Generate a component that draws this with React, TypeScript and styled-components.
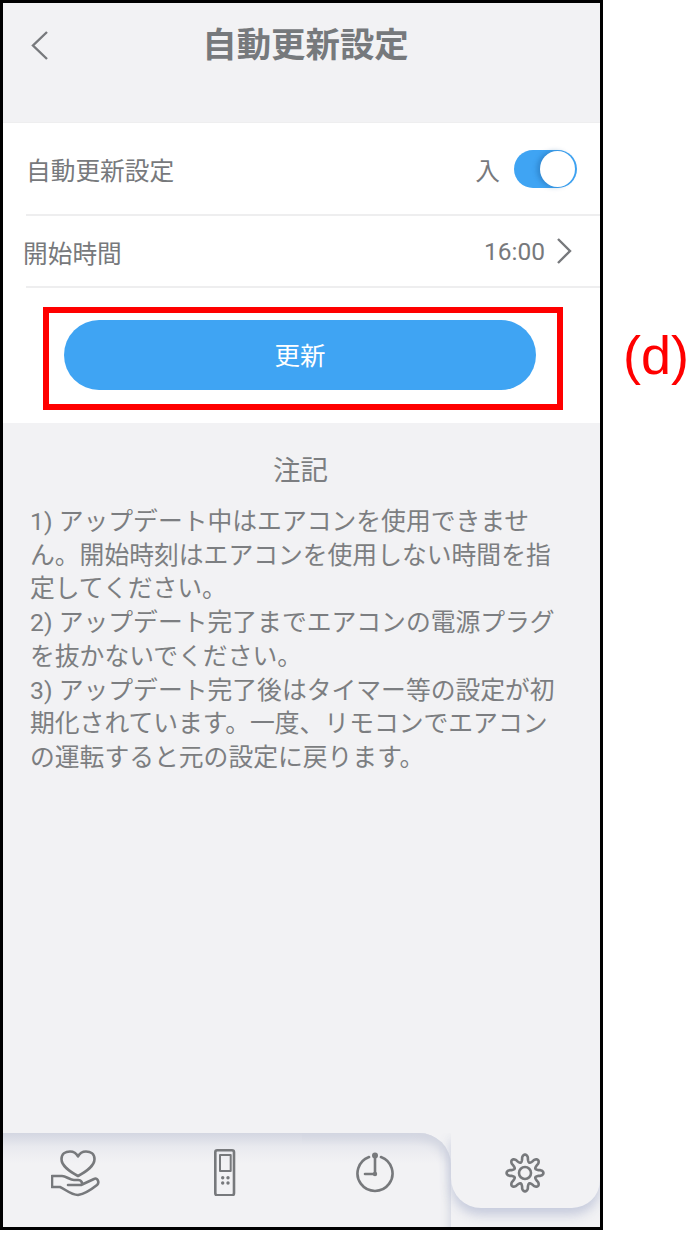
import styled, { createGlobalStyle } from 'styled-components';

const GlobalStyle = createGlobalStyle`
  html, body {
    margin: 0;
    padding: 0;
    background: #fff;
  }

  body {
    font-family: Roboto, "Noto Sans CJK JP", sans-serif;
  }
`;

const Canvas = styled.div`
  position: relative;
  width: 693px;
  height: 1233px;
  overflow: hidden;
`;

const Phone = styled.div`
  box-sizing: border-box;
  width: 603px;
  height: 1230px;
  border: 3px solid #000;
  background: #f2f2f4;
  display: flex;
  flex-direction: column;
`;

const Header = styled.header`
  height: 119px;
  flex-shrink: 0;
  display: grid;
  grid-template-columns: 60px 1fr 60px;
  align-items: start;
  padding-top: 18px;
  box-sizing: border-box;
`;

const BackButton = styled.div`
  padding: 10px 0 0 28px;
  height: 40px;
`;

const Title = styled.h1`
  margin: 0 0 0 8px;
  text-align: center;
  font-size: 34.4px;
  line-height: 48px;
  font-weight: 700;
  color: #76797c;
`;

const Panel = styled.section`
  background: #fff;
  border-top: 1px solid #eeeeef;
`;

const Row = styled.div<{ $height: number }>`
  height: ${({ $height }) => $height}px;
  box-sizing: border-box;
  margin-left: 23px;
  padding-right: 23px;
  border-bottom: 2px solid #eeeeef;
  display: flex;
  align-items: center;
  justify-content: space-between;
  color: #77797c;
  font-size: 24.7px;
`;

const RowLabel = styled.span<{ $indent: number; $drop: number }>`
  margin-left: ${({ $indent }) => $indent}px;
  margin-top: ${({ $drop }) => $drop}px;
`;

const RowValue = styled.div<{ $gap: number; $inset: number }>`
  display: flex;
  align-items: center;
  gap: ${({ $gap }) => $gap}px;
  padding-right: ${({ $inset }) => $inset}px;
`;

const Toggle = styled.div`
  width: 63px;
  height: 38px;
  border-radius: 19px;
  background: #3fa4f3;
  position: relative;
  box-sizing: border-box;
`;

const Knob = styled.div`
  position: absolute;
  right: 2px;
  top: 1px;
  width: 35px;
  height: 36px;
  border-radius: 50%;
  background: #fff;
  box-shadow: -3px 0 5px rgba(20, 80, 140, 0.35);
`;

const Time = styled.span`
  font-size: 24.5px;
`;

const ButtonArea = styled.div`
  height: 135px;
  display: flex;
  padding: 32px 0 0 61px;
  box-sizing: border-box;
`;

const UpdateButton = styled.button`
  width: 472px;
  height: 70px;
  border: 0;
  padding: 0 0 4px;
  border-radius: 35px;
  background: #3fa4f3;
  color: #fff;
  font-family: inherit;
  font-size: 25.5px;
`;

const Notes = styled.section`
  flex: 1;
  padding: 28px 0 0 27px;
  color: #7c7e81;
`;

const NotesTitle = styled.h2`
  margin: 0 0 14px;
  width: 541px;
  text-align: center;
  font-size: 27.5px;
  line-height: 40px;
  font-weight: 400;
`;

const NotesText = styled.p`
  margin: 0;
  font-size: 24.8px;
  line-height: 33.7px;
  white-space: pre;
`;

const TabBar = styled.nav`
  height: 94px;
  display: grid;
  grid-template-columns: repeat(4, 1fr);
  flex-shrink: 0;
  overflow: hidden;
`;

const Tab = styled.div<{ $shift: number }>`
  display: flex;
  align-items: center;
  justify-content: center;
  padding: 0 ${({ $shift }) => $shift}px 18px 0;
  background: linear-gradient(#d3d6e1 0, #e9eaef 14px, #f2f2f4 30px);
`;

const ClockTab = styled(Tab)`
  border-top-right-radius: 32px;
  box-shadow: inset -9px 9px 10px -7px #d3d6e1;
`;

const ActiveTab = styled.div`
  display: flex;
  align-items: center;
  justify-content: center;
  box-sizing: border-box;
  height: 75px;
  padding-top: 5px;
  border-radius: 0 0 28px 30px;
  background: #f2f2f4;
  box-shadow: 0 7px 11px rgba(190, 196, 216, 0.85);
`;

const Highlight = styled.div`
  position: absolute;
  left: 43px;
  top: 307px;
  width: 520px;
  height: 103px;
  box-sizing: border-box;
  border: 6px solid #ff0000;
`;

const Callout = styled.div`
  position: absolute;
  left: 623px;
  top: 325px;
  color: #ff0000;
  font-family: "Liberation Sans", sans-serif;
  font-size: 54px;
  line-height: 60px;
`;

const Chevron = styled.svg`
  display: block;
  fill: none;
  stroke: #77797c;
  stroke-width: 2.4;
`;

const Icon = styled.svg`
  display: block;
  fill: none;
  stroke: #77797c;
  stroke-width: 2.6;
  stroke-linecap: round;
  stroke-linejoin: round;
`;

function gearPath(): string {
  const points: string[] = [];
  for (let i = 0; i < 240; i += 1) {
    const angle = (i / 240) * Math.PI * 2;
    const wave = Math.cos(angle * 8);
    const radius = 14.8 + 3.6 * Math.sign(wave) * Math.pow(Math.abs(wave), 0.65);
    const x = 20 + radius * Math.sin(angle);
    const y = 20 - radius * Math.cos(angle);
    points.push(`${x.toFixed(2)} ${y.toFixed(2)}`);
  }
  return `M${points.join(' L')} Z`;
}

function HandHeart(): JSX.Element {
  return (
    <Icon width="50" height="58" viewBox="0 0 50 58">
      <path d="M27 34 C18 29 10.500 24 10.500 17 C10.500 12 14.500 9.500 19 9.500 C22.500 9.500 25.500 11.500 27 14.500 C28.500 11.500 31.500 9.500 35 9.500 C39.500 9.500 43.500 12 43.500 17 C43.500 24 36 29 27 34 Z" />
      <path d="M1 34 L1 45 L9 45 C14 47 20 53 27 53 C33 52 41 47 46 43 C49 40 46 35 43 37 L30 43 L17 43 M1 34 L11 34 C15 34 19 38 23 38 L27 38 C31 38 32 42 30 43" />
    </Icon>
  );
}

function Remote(): JSX.Element {
  return (
    <Icon width="24" height="50" viewBox="0 -1 24 50">
      <rect x="2.300" y="3.300" width="18.700" height="45" rx="2" />
      <rect x="7" y="8" width="10.700" height="16" strokeWidth="2" strokeLinecap="butt" />
      <circle cx="9.700" cy="30.700" r="1.700" fill="#77797c" stroke="none" />
      <circle cx="15" cy="30.700" r="1.700" fill="#77797c" stroke="none" />
      <circle cx="9.700" cy="36" r="1.700" fill="#77797c" stroke="none" />
      <circle cx="15" cy="36" r="1.700" fill="#77797c" stroke="none" />
    </Icon>
  );
}

function Timer(): JSX.Element {
  return (
    <Icon width="40" height="44" viewBox="0 0 40 44">
      <path d="M14 8 A17.500 17.500 0 1 0 26 8" />
      <circle cx="20" cy="6.500" r="3" fill="#77797c" stroke="none" />
      <path d="M20 8 L20 25 L10 25" />
      <circle cx="20" cy="25" r="2.200" fill="#77797c" stroke="none" />
    </Icon>
  );
}

function Gear(): JSX.Element {
  return (
    <Icon width="40" height="40" viewBox="0 0 40 40">
      <path d={gearPath()} />
      <circle cx="20" cy="20" r="6" />
    </Icon>
  );
}

const noteText = `1) アップデート中はエアコンを使用できませ
ん。開始時刻はエアコンを使用しない時間を指
定してください。
2) アップデート完了までエアコンの電源プラグ
を抜かないでください。
3) アップデート完了後はタイマー等の設定が初
期化されています。一度、リモコンでエアコン
の運転すると元の設定に戻ります。`;

export default function App(): JSX.Element {
  return (
    <Canvas>
      <GlobalStyle />
      <Phone>
        <Header>
          <BackButton>
            <Chevron width="17" height="29" viewBox="0 0 17 29">
              <path d="M16 1 L2 14.500 L16 28" />
            </Chevron>
          </BackButton>
          <Title>自動更新設定</Title>
        </Header>
        <Panel>
          <Row $height={93}>
            <RowLabel $indent={0} $drop={0}>自動更新設定</RowLabel>
            <RowValue $gap={14} $inset={0}>
              <span>入</span>
              <Toggle>
                <Knob />
              </Toggle>
            </RowValue>
          </Row>
          <Row $height={72}>
            <RowLabel $indent={-3} $drop={1}>開始時間</RowLabel>
            <RowValue $gap={11} $inset={5}>
              <Time>16:00</Time>
              <Chevron width="16" height="26" viewBox="0 0 16 26">
                <path d="M2 1 L14 13 L2 25" />
              </Chevron>
            </RowValue>
          </Row>
          <ButtonArea>
            <UpdateButton>更新</UpdateButton>
          </ButtonArea>
        </Panel>
        <Notes>
          <NotesTitle>注記</NotesTitle>
          <NotesText>{noteText}</NotesText>
        </Notes>
        <TabBar>
          <Tab $shift={4}><HandHeart /></Tab>
          <Tab $shift={4}><Remote /></Tab>
          <ClockTab $shift={2}><Timer /></ClockTab>
          <ActiveTab><Gear /></ActiveTab>
        </TabBar>
      </Phone>
      <Highlight />
      <Callout>(d)</Callout>
    </Canvas>
  );
}
